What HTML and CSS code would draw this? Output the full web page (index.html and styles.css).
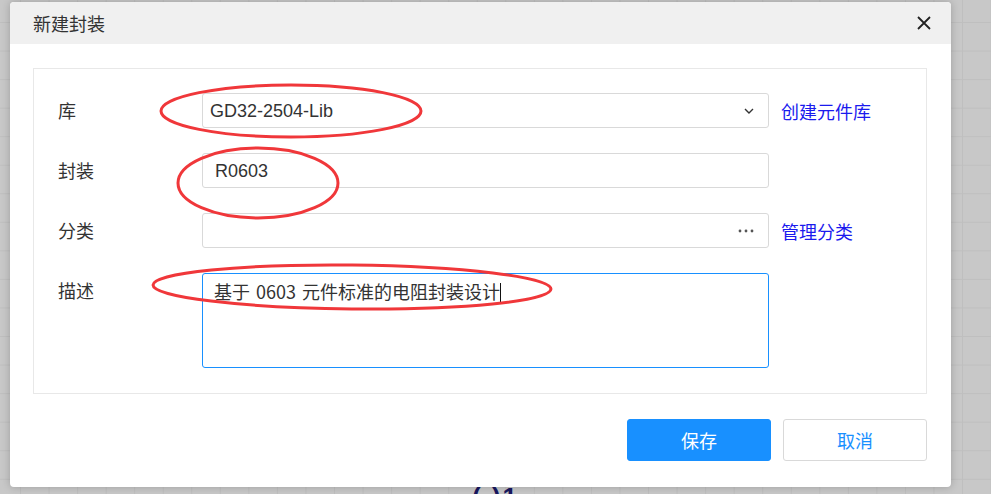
FILE: index.html
```html
<!DOCTYPE html>
<html lang="zh">
<head>
<meta charset="utf-8">
<title>新建封装</title>
<link rel="stylesheet" href="styles.css">
</head>
<body>
<div class="canvas-glyph">(&nbsp;)1</div>
<div class="dialog">
  <div class="dialog-header">
    <span class="dialog-title">新建封装</span>
    <svg class="close-icon" width="16" height="16" viewBox="0 0 16 16"><path d="M2 2 L14 14 M14 2 L2 14" stroke="#222" stroke-width="1.8" fill="none"/></svg>
  </div>
  <div class="dialog-body">
    <div class="form-box">
      <div class="form-row">
        <span class="label">库</span>
        <div class="field select">
          <span class="field-text latin">GD32-2504-Lib</span>
          <svg class="chev" width="10" height="6" viewBox="0 0 10 6"><path d="M1 1 L5 5 L9 1" stroke="#333" stroke-width="1.4" fill="none"/></svg>
        </div>
        <a class="link">创建元件库</a>
      </div>
      <div class="form-row">
        <span class="label">封装</span>
        <div class="field input">
          <span class="field-text latin">R0603</span>
        </div>
      </div>
      <div class="form-row">
        <span class="label">分类</span>
        <div class="field select">
          <span class="field-text"></span>
          <svg class="dots" width="16" height="4" viewBox="0 0 16 4"><circle cx="2" cy="2" r="1.4" fill="#555"/><circle cx="8" cy="2" r="1.4" fill="#555"/><circle cx="14" cy="2" r="1.4" fill="#555"/></svg>
        </div>
        <a class="link">管理分类</a>
      </div>
      <div class="form-row top">
        <span class="label">描述</span>
        <div class="field textarea">
          <span class="field-text desc">基于 0603 元件标准的电阻封装设计<span class="caret"></span></span>
        </div>
      </div>
    </div>
    <div class="footer">
      <button class="btn primary">保存</button>
      <button class="btn default">取消</button>
    </div>
  </div>
</div>
<svg class="annotations" width="991" height="494" viewBox="0 0 991 494">
  <ellipse cx="291" cy="111" rx="130" ry="26" fill="none" stroke="#f0373a" stroke-width="3"/>
  <ellipse cx="258" cy="183" rx="80" ry="35" fill="none" stroke="#f0373a" stroke-width="3"/>
  <ellipse cx="352" cy="287" rx="199" ry="22" fill="none" stroke="#f0373a" stroke-width="3" transform="rotate(0.6 352 287)"/>
</svg>
</body>
</html>
```

FILE: styles.css
```css
html, body {
  margin: 0;
  padding: 0;
}
body {
  width: 991px;
  height: 494px;
  overflow: hidden;
  position: relative;
  background-color: #c8c8c8;
  background-image:
    linear-gradient(to right, #bfbfbf 1px, transparent 1px),
    linear-gradient(to bottom, #bfbfbf 1px, transparent 1px);
  background-size: 28.55px 28.55px;
  background-position: 20px 22px;
  font-family: "Noto Sans CJK SC", "Liberation Sans", sans-serif;
  color: #333;
}
.canvas-glyph {
  position: absolute;
  left: 472px;
  top: 484px;
  font-family: "Liberation Sans", sans-serif;
  font-weight: bold;
  font-size: 26px;
  line-height: 26px;
  color: #17175f;
  letter-spacing: 2px;
}
.dialog {
  position: relative;
  margin: 2px 0 0 10px;
  width: 941px;
  height: 485px;
  background: #fff;
  border-radius: 4px;
  box-shadow: 0 0 8px rgba(0, 0, 0, 0.22);
  display: flex;
  flex-direction: column;
}
.dialog-header {
  height: 42px;
  background: #f0f0f0;
  border-radius: 4px 4px 0 0;
  display: flex;
  align-items: center;
  justify-content: space-between;
  padding: 0 19px 0 23px;
}
.dialog-title {
  font-size: 18px;
  color: #333;
}
.close-icon {
  display: block;
}
.dialog-body {
  padding: 24px 24px 26px 23px;
  display: flex;
  flex-direction: column;
  gap: 25px;
}
.form-box {
  border: 1px solid #e8e8e8;
  padding: 24px 0 25px 24px;
  display: flex;
  flex-direction: column;
  gap: 25px;
}
.form-row {
  display: flex;
  align-items: center;
  height: 35px;
}
.form-row.top {
  align-items: flex-start;
  height: 95px;
}
.label {
  width: 144px;
  font-size: 18px;
  line-height: 35px;
  color: #333;
}
.field {
  width: 567px;
  height: 35px;
  box-sizing: border-box;
  border: 1px solid #d9d9d9;
  border-radius: 3px;
  display: flex;
  align-items: center;
  justify-content: space-between;
  background: #fff;
}
.field.select {
  padding: 0 14px 0 7px;
}
.field.input {
  padding: 0 12px;
}
.field.textarea {
  height: 95px;
  border-color: #1890ff;
  align-items: flex-start;
  padding: 6px 11px;
}
.field-text {
  font-size: 18px;
  color: #333;
  line-height: 22px;
}
.field-text.desc {
  word-spacing: 2px;
}
.field-text.latin {
  font-family: "Liberation Sans", "Noto Sans CJK SC", sans-serif;
  font-size: 18px;
}
.caret {
  display: inline-block;
  width: 1px;
  height: 20px;
  background: #111;
  vertical-align: -4px;
}
.chev, .dots {
  display: block;
}
.link {
  margin-left: 12px;
  font-size: 18px;
  color: #1a1aee;
  cursor: pointer;
}
.footer {
  display: flex;
  justify-content: flex-end;
  gap: 12px;
}
.btn {
  width: 144px;
  height: 42px;
  border-radius: 3px;
  font-family: "Noto Sans CJK SC", sans-serif;
  font-size: 18px;
  cursor: pointer;
}
.btn.primary {
  background: #1890ff;
  border: 1px solid #1890ff;
  color: #fff;
}
.btn.default {
  background: #fff;
  border: 1px solid #d9d9d9;
  color: #1890ff;
}
.annotations {
  position: absolute;
  left: 0;
  top: 0;
  pointer-events: none;
}
```
